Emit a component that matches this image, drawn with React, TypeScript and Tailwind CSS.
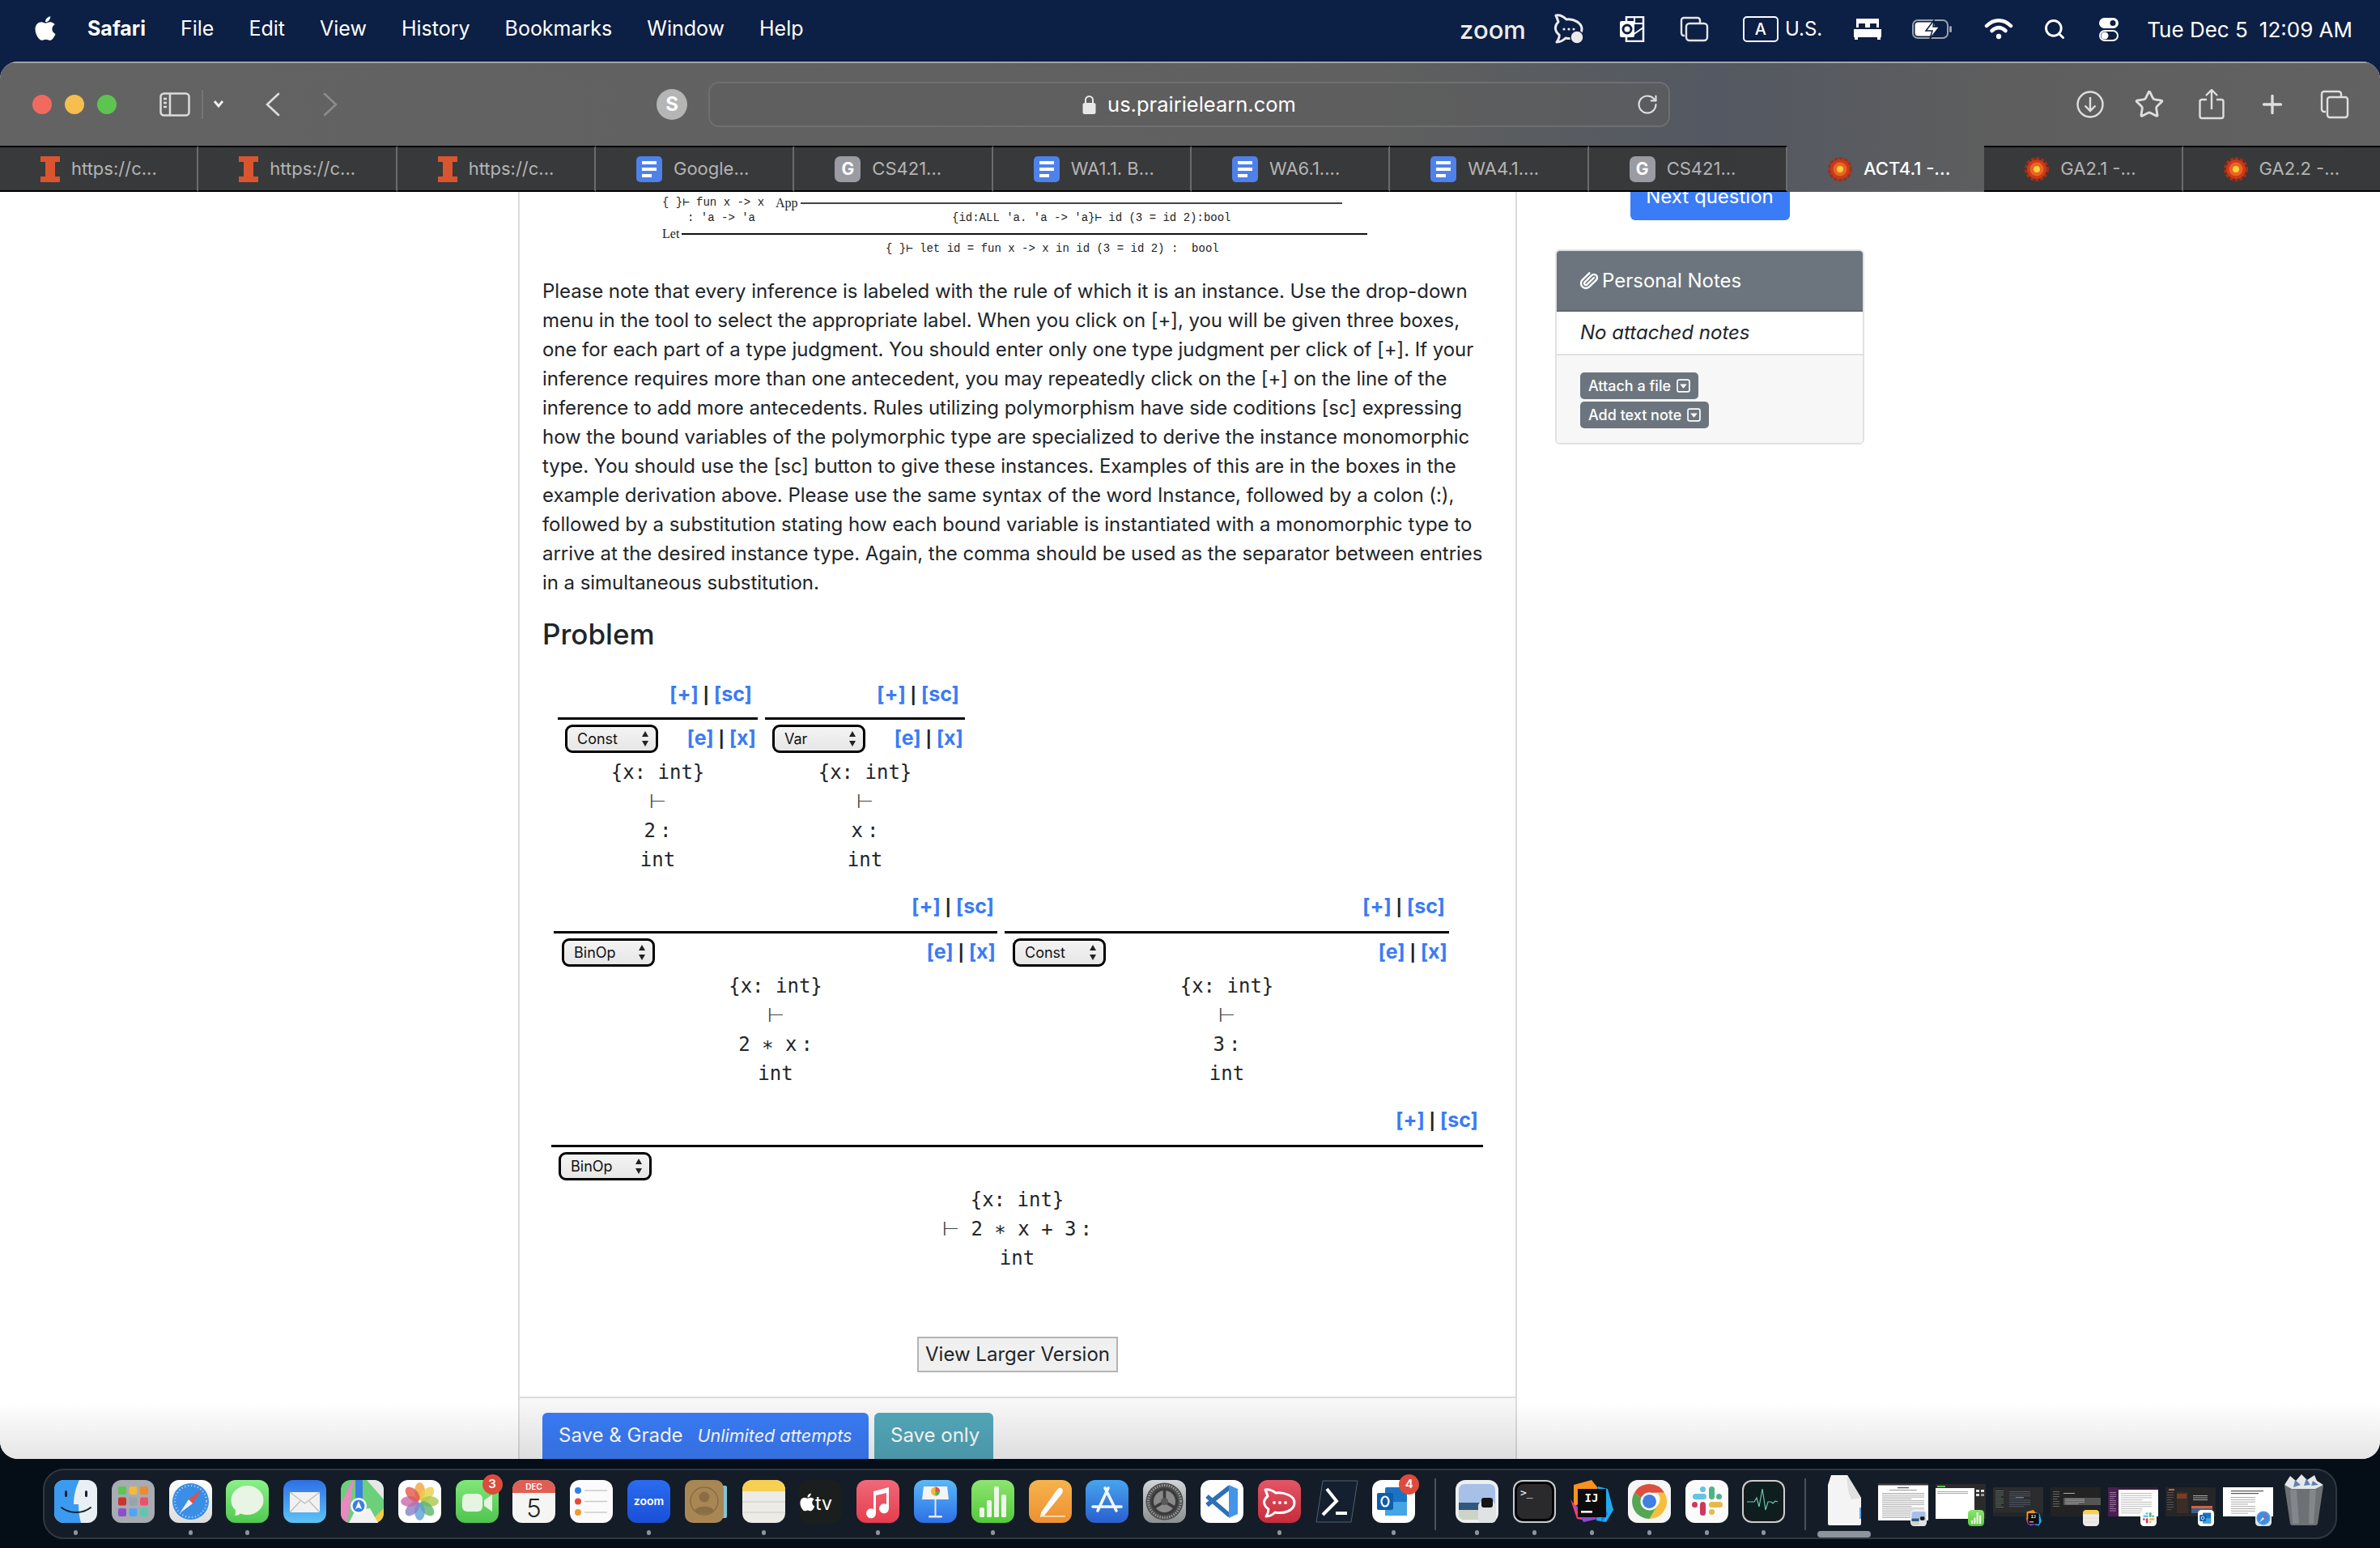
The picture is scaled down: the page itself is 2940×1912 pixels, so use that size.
import { Paperclip, Plus, RotateCw, Search, Star } from "lucide-react";
import { FaApple } from "react-icons/fa";
import type { ReactNode } from "react";

const mono = "[font-family:'DejaVu_Sans_Mono',monospace]";

const paragraph = [
  "Please note that every inference is labeled with the rule of which it is an instance. Use the drop-down",
  "menu in the tool to select the appropriate label. When you click on [+], you will be given three boxes,",
  "one for each part of a type judgment. You should enter only one type judgment per click of [+]. If your",
  "inference requires more than one antecedent, you may repeatedly click on the [+] on the line of the",
  "inference to add more antecedents. Rules utilizing polymorphism have side coditions [sc] expressing",
  "how the bound variables of the polymorphic type are specialized to derive the instance monomorphic",
  "type. You should use the [sc] button to give these instances. Examples of this are in the boxes in the",
  "example derivation above. Please use the same syntax of the word Instance, followed by a colon (:),",
  "followed by a substitution stating how each bound variable is instantiated with a monomorphic type to",
  "arrive at the desired instance type. Again, the comma should be used as the separator between entries",
  "in a simultaneous substitution.",
];

const tabs = [
  { icon: "i", label: "https://c..." },
  { icon: "i", label: "https://c..." },
  { icon: "i", label: "https://c..." },
  { icon: "d", label: "Google..." },
  { icon: "g", label: "CS421..." },
  { icon: "d", label: "WA1.1. B..." },
  { icon: "d", label: "WA6.1...." },
  { icon: "d", label: "WA4.1...." },
  { icon: "g", label: "CS421..." },
  { icon: "p", label: "ACT4.1 -...", active: true },
  { icon: "p", label: "GA2.1 -..." },
  { icon: "p", label: "GA2.2 -..." },
];

function Favicon({ kind }: { kind: string }) {
  if (kind === "i") {
    return (
      <svg width="24" height="32" viewBox="0 0 24 32" className="shrink-0">
        <path d="M0 0h24v7h-6v18h6v7H0v-7h6V7H0z" fill="#d9552f" />
      </svg>
    );
  }
  if (kind === "d") {
    return (
      <svg width="32" height="32" viewBox="0 0 32 32" className="shrink-0">
        <rect width="32" height="32" rx="5" fill="#4f81ea" />
        <rect x="7" y="6" width="18" height="4" fill="#fff" />
        <rect x="7" y="14" width="18" height="4" fill="#fff" />
        <rect x="7" y="22" width="12" height="4" fill="#fff" />
      </svg>
    );
  }
  if (kind === "g") {
    return (
      <div className="flex h-[32px] w-[32px] shrink-0 items-center justify-center rounded-[7px] bg-[#9b9ba3] text-[21px] font-bold text-white">
        G
      </div>
    );
  }
  return (
    <svg width="30" height="32" viewBox="0 0 30 32" className="shrink-0">
      <circle cx="15" cy="16" r="13" fill="none" stroke="#a92c14" strokeWidth="4" strokeDasharray="4 2" />
      <circle cx="15" cy="16" r="12" fill="#c93a1a" />
      <circle cx="15" cy="16" r="8.5" fill="#ec6424" />
      <circle cx="15" cy="16" r="4" fill="#f3d13a" />
    </svg>
  );
}

function MenuBar() {
  return (
    <div className="flex h-[76px] items-center pb-[4px] pl-[41px] pr-[34px] text-[25px] text-white">
      <FaApple className="mr-[37px] h-[34px] w-[30px] -translate-y-[1px]" />
      <div className="flex gap-[43px]">
        <span className="font-bold">Safari</span>
        <span>File</span>
        <span>Edit</span>
        <span>View</span>
        <span>History</span>
        <span>Bookmarks</span>
        <span>Window</span>
        <span>Help</span>
      </div>
      <div className="ml-auto flex items-center">
        <span className="text-[31px] font-medium leading-none text-[#ececec]">zoom</span>
        <svg width="40" height="38" viewBox="0 0 40 38" className="ml-[34px]" fill="none">
          <path d="M3 2c5-1 9 1 13 5 9-1 19 4 19 12 0 9-11 13-20 11-3 3-7 5-11 5 2-3 4-6 3-9-6-5-6-11-1-16-1-3-2-6-3-8z" stroke="#ececf0" strokeWidth="3" strokeLinejoin="round" />
          <circle cx="13" cy="19" r="1.6" fill="#ececf0" />
          <circle cx="19" cy="19" r="1.6" fill="#ececf0" />
          <circle cx="25" cy="19" r="1.6" fill="#ececf0" />
          <circle cx="29" cy="29" r="8" fill="#e8e8ee" stroke="#0b1d40" strokeWidth="1.5" />
        </svg>
        <svg width="32" height="32" viewBox="0 0 32 32" className="ml-[42px]">
          <rect x="8" y="1" width="21" height="30" fill="none" stroke="#fff" strokeWidth="2.5" />
          <path d="M8 9h21M18 1v8M29 14 16 23" stroke="#fff" strokeWidth="2" fill="none" />
          <rect x="0" y="6" width="18" height="20" rx="2" fill="#fff" />
          <circle cx="9" cy="16" r="5" fill="none" stroke="#0b1d40" strokeWidth="3" />
        </svg>
        <svg width="36" height="32" viewBox="0 0 36 32" className="ml-[42px]" fill="none" stroke="#e6e6ea" strokeWidth="2.4">
          <path d="M6 24H5a3 3 0 0 1-3-3V5a3 3 0 0 1 3-3h17a3 3 0 0 1 3 3v3" />
          <rect x="8" y="9" width="26" height="21" rx="4" />
        </svg>
        <div className="ml-[42px] flex h-[32px] w-[44px] items-center justify-center rounded-[5px] border-2 border-white text-[20px] font-medium">
          A
        </div>
        <span className="ml-[8px] text-[24px]">U.S.</span>
        <svg width="36" height="26" viewBox="0 0 36 26" className="ml-[38px]" fill="#fff">
          <path d="M4 0h28v11h-3V6h-8v5h-6V6H7v5H4z" />
          <path d="M1 13h34v10H1zM2 23h4v3H2zM30 23h4v3h-4z" />
        </svg>
        <svg width="50" height="24" viewBox="0 0 50 24" className="ml-[37px]">
          <rect x="1" y="1" width="43" height="22" rx="6" fill="none" stroke="#9aa2ad" strokeWidth="2" />
          <rect x="3.500" y="3.500" width="24" height="17" rx="4" fill="#fff" />
          <path d="M27 1 17 14h8l-3 10 12-15h-8z" fill="#fff" stroke="#0b1d40" strokeWidth="1.5" />
          <rect x="46" y="8" width="3" height="8" rx="1.5" fill="#9aa2ad" />
        </svg>
        <svg width="36" height="28" viewBox="0 0 36 28" className="ml-[39px]" fill="none" stroke="#fff" strokeWidth="4.5" strokeLinecap="round">
          <path d="M3 10c9-9 21-9 30 0" />
          <path d="M9.500 16c5.500-5 11.500-5 17 0" />
          <circle cx="18" cy="23" r="2.400" fill="#fff" strokeWidth="1.5" />
        </svg>
        <Search className="ml-[37px] h-[28px] w-[28px]" strokeWidth={2.5} />
        <svg width="26" height="32" viewBox="0 0 26 32" className="ml-[40px]">
          <rect x="1" y="2" width="24" height="13" rx="6.500" fill="#fff" />
          <circle cx="18" cy="8.500" r="3.500" fill="#0b1d40" />
          <rect x="2" y="18" width="22" height="12" rx="6" fill="none" stroke="#fff" strokeWidth="2" />
          <circle cx="8" cy="24" r="4.500" fill="#fff" />
        </svg>
        <div className="ml-[34px] flex gap-[14px] text-[26px]">
          <span>Tue Dec 5</span>
          <span>12:09 AM</span>
        </div>
      </div>
    </div>
  );
}

function Toolbar() {
  return (
    <div className="flex h-[104px] items-center border-t-2 border-[#a3a3a3] text-white">
      <div className="ml-[40px] flex gap-[16px]">
        <span className="h-[24px] w-[24px] rounded-full bg-[#f26a5e]" />
        <span className="h-[24px] w-[24px] rounded-full bg-[#f6bd4f]" />
        <span className="h-[24px] w-[24px] rounded-full bg-[#5dc44f]" />
      </div>
      <svg width="38" height="30" viewBox="0 0 38 30" fill="none" className="ml-[53px]" stroke="#dcdcdc" strokeWidth="2.5">
        <rect x="1.500" y="1.500" width="35" height="27" rx="4" />
        <path d="M13 2v26" />
        <path d="M5 8h4M5 13h4M5 18h4" />
      </svg>
      <span className="ml-[14px] h-[36px] w-[2px] bg-[#757575]" />
      <svg width="20" height="12" viewBox="0 0 20 12" fill="none" stroke="#eee" strokeWidth="3" className="ml-[9px]">
        <path d="M5 2l5 6 5-6" />
      </svg>
      <svg width="20" height="30" viewBox="0 0 20 30" fill="none" stroke="#dedede" strokeWidth="2.6" strokeLinecap="round" className="ml-[47px]">
        <path d="M17 2 3 15l14 13" />
      </svg>
      <svg width="20" height="30" viewBox="0 0 20 30" fill="none" stroke="#8c8c8c" strokeWidth="2.6" strokeLinecap="round" className="ml-[51px]">
        <path d="M3 2l14 13L3 28" />
      </svg>
      <div className="ml-[393px] flex h-[38px] w-[38px] items-center justify-center rounded-full bg-[#b5b5b5] text-[24px] font-bold">
        S
      </div>
      <div className="relative ml-[26px] flex h-[56px] w-[1188px] items-center justify-center rounded-[13px] border-2 border-[#6e6f70] bg-[#5d5e5e]/60">
        <svg width="17" height="24" viewBox="0 0 17 24" className="mr-[14px]">
          <path d="M4 11V6.500a4.500 4.500 0 0 1 9 0V11" fill="none" stroke="#e8e8e8" strokeWidth="2" />
          <rect x="0.500" y="10" width="16" height="14" rx="2.500" fill="#e8e8e8" />
        </svg>
        <span className="text-[25.5px]">us.prairielearn.com</span>
        <RotateCw className="absolute right-[12px] h-[28px] w-[28px] text-[#dedede]" strokeWidth={1.8} />
      </div>
      <div className="ml-auto mr-[38px] flex items-center gap-[41px] text-[#dedede]">
        <svg width="34" height="34" viewBox="0 0 34 34" fill="none" stroke="currentColor" strokeWidth="2.4">
          <circle cx="17" cy="17" r="15.500" />
          <path d="M17 8v17M10.500 18.500 17 25l6.500-6.500" />
        </svg>
        <Star className="-ml-[3px] h-[38px] w-[38px] -translate-x-[1px]" strokeWidth={1.8} />
        <svg width="32" height="38" viewBox="0 0 32 38" fill="none" stroke="currentColor" strokeWidth="2.4">
          <path d="M10 13H4a2.500 2.500 0 0 0-2.500 2.500v18A2.500 2.500 0 0 0 4 36h24a2.500 2.500 0 0 0 2.500-2.500v-18A2.500 2.500 0 0 0 28 13h-6" />
          <path d="M16 25V2M9 8l7-7 7 7" />
        </svg>
        <Plus className="h-[36px] w-[36px]" strokeWidth={2.2} />
        <svg width="36" height="36" viewBox="0 0 36 36" fill="none" stroke="currentColor" strokeWidth="2.4">
          <path d="M7 27H5a3 3 0 0 1-3-3V5a3 3 0 0 1 3-3h18a3 3 0 0 1 3 3v3" />
          <rect x="9" y="9" width="25" height="25" rx="3" />
        </svg>
      </div>
    </div>
  );
}

function TabBar() {
  return (
    <div className="flex h-[57px]">
      {tabs.map((t, i) => (
        <div
          key={i}
          className={
            t.active
              ? "flex flex-1 items-center gap-[14px] pl-[50px] text-[22px] font-medium text-white"
              : "flex flex-1 items-center gap-[14px] border-y-2 border-r-2 border-y-black border-r-[#6b6b6b] bg-[#343536]/90 pl-[50px] text-[22px] text-[#b4b4b4] last:border-r-0"
          }
        >
          <Favicon kind={t.icon} />
          <span className="whitespace-nowrap">{t.label}</span>
        </div>
      ))}
    </div>
  );
}

function FigureExample() {
  const serif = "[font-family:'Liberation_Serif',serif] text-[16px]";
  return (
    <div className="pt-[4px] text-[14px] leading-[19px] text-[#222] [font-family:'Liberation_Mono',monospace]">
      <div className="flex h-[19px] items-center pl-[176px]">
        <span className="whitespace-pre">{"{ }⊢ fun x -> x"}</span>
        <span className={`ml-[14px] ${serif}`}>App</span>
        <span className="ml-[3px] h-[2px] w-[669px] bg-[#444]" />
      </div>
      <div className="flex h-[19px] items-center pl-[207px]">
        <span className="w-[327px] whitespace-pre">{": 'a -> 'a"}</span>
        <span className="whitespace-pre">{"{id:ALL 'a. 'a -> 'a}⊢ id (3 = id 2):bool"}</span>
      </div>
      <div className="flex h-[19px] items-center pl-[176px]">
        <span className={serif}>Let</span>
        <span className="ml-[3px] h-[2px] w-[847px] bg-[#111]" />
      </div>
      <div className="flex h-[19px] items-center pl-[452px]">
        <span className="whitespace-pre">{"{ }⊢ let id = fun x -> x in id (3 = id 2) :  bool"}</span>
      </div>
    </div>
  );
}

function BlueLinks({ items }: { items: [string, string] }) {
  return (
    <span className="whitespace-pre text-[25px] font-bold leading-[36px] text-[#212529]">
      <span className="text-[#3a7bf6]">{items[0]}</span>
      <span className="mx-[1px] text-[20px]"> | </span>
      <span className="text-[#3a7bf6]">{items[1]}</span>
    </span>
  );
}

function RuleSelect({ label }: { label: string }) {
  return (
    <div className="relative flex h-[35px] w-[115px] shrink-0 items-center rounded-[9px] border-[3px] border-black bg-[linear-gradient(180deg,#f4f4f4,#e6e6e6)] pl-[12px] text-[18px] text-[#111]">
      {label}
      <svg width="8" height="19" viewBox="0 0 8 19" className="absolute right-[9px]">
        <path d="M4 0l4 7H0zM4 19l4-7H0z" fill="#222" />
      </svg>
    </div>
  );
}

function Turnstile() {
  return <span className="text-[24px] font-light text-[#444] [font-family:'DejaVu_Sans',sans-serif]">⊢</span>;
}

function Typed({ expr }: { expr: string }) {
  return (
    <span>
      {expr}
      <span className="ml-[5px]">:</span>
    </span>
  );
}

type NodeProps = {
  rule: string;
  lines: ReactNode[];
  actions?: boolean;
  premises?: ReactNode;
  width: string;
  pad: string;
  selectIndent: string;
};

function Inference({ rule, lines, actions = true, premises, width, pad, selectIndent }: NodeProps) {
  return (
    <div className={`flex shrink-0 flex-col ${width}`}>
      {premises}
      <div className={`flex h-[36px] -translate-y-[1px] justify-end ${pad}`}>
        <BlueLinks items={["[+]", "[sc]"]} />
      </div>
      <div className="h-[3px] bg-black" />
      <div className={`mt-[6px] flex h-[35px] items-center justify-between ${selectIndent}`}>
        <RuleSelect label={rule} />
        {actions && (
          <span className="-translate-y-[1px] pr-[2px]">
            <BlueLinks items={["[e]", "[x]"]} />
          </span>
        )}
      </div>
      <div className={`mt-[6px] flex flex-col items-center text-[24px] text-[#212529] ${mono}`}>
        {lines.map((l, i) => (
          <div key={i} className="h-[36px] whitespace-pre leading-[36px]">
            {l}
          </div>
        ))}
      </div>
    </div>
  );
}

function Tree() {
  return (
    <div className="ml-[11px] mt-[33px] w-[1151px]">
      <Inference
        width="w-[1151px]"
        pad="mb-[12px] pr-[6px]"
        selectIndent="pl-[9px]"
        rule="BinOp"
        actions={false}
        lines={[
          "{x: int}",
          <span key="t">
            <Turnstile /> <Typed expr="2 ∗ x + 3" />
          </span>,
          "int",
        ]}
        premises={
          <div className="mb-[22px] flex items-end gap-[9px] pl-[3px]">
            <Inference
              width="w-[548px]"
              pad="mb-[12px] pr-[4px]"
              selectIndent="pl-[10px]"
              rule="BinOp"
              lines={["{x: int}", <Turnstile key="t" />, <Typed key="e" expr="2 ∗ x" />, "int"]}
              premises={
                <div className="mb-[22px] flex items-end gap-[9px] pl-[5px]">
                  <Inference
                    width="w-[247px]"
                    pad="mb-[10px] pr-[7px]"
                    selectIndent="pl-[9px]"
                    rule="Const"
                    lines={["{x: int}", <Turnstile key="t" />, <Typed key="e" expr="2" />, "int"]}
                  />
                  <Inference
                    width="w-[247px]"
                    pad="mb-[10px] pr-[7px]"
                    selectIndent="pl-[9px]"
                    rule="Var"
                    lines={["{x: int}", <Turnstile key="t" />, <Typed key="e" expr="x" />, "int"]}
                  />
                </div>
              }
            />
            <Inference
              width="w-[549px]"
              pad="mb-[12px] pr-[5px]"
              selectIndent="pl-[10px]"
              rule="Const"
              lines={["{x: int}", <Turnstile key="t" />, <Typed key="e" expr="3" />, "int"]}
            />
          </div>
        }
      />
    </div>
  );
}

function MainCard() {
  return (
    <div className="ml-[640px] w-[1234px] shrink-0 border-x-2 border-[#dcdcdc]">
      <FigureExample />
      <div className="px-[28px] pt-[25px] text-[24px] leading-[36px] tracking-[-0.055px] text-[#212529]">
        {paragraph.map((line, i) => (
          <div key={i} className="whitespace-nowrap">
            {line}
          </div>
        ))}
        <h2 className="mt-[21px] text-[35px] font-medium leading-[48px] tracking-normal">Problem</h2>
      </div>
      <div className="pl-[28px]">
        <Tree />
      </div>
      <div className="mt-[79px] flex justify-center">
        <div className="flex h-[44px] w-[248px] items-center justify-center border-2 border-[#b4b4b4] bg-[#f0f0f0] text-[24px] text-[#212529]">
          View Larger Version
        </div>
      </div>
      <div className="mt-[30px] flex h-[200px] gap-[7px] border-t-2 border-[#dcdcdc] bg-[#f7f7f7] pl-[28px] pt-[18px]">
        <div className="flex h-[70px] w-[403px] items-start gap-[18px] rounded-[6px] bg-[#3a7bf6] pl-[20px] pt-[10px] text-[24px] text-white">
          <span>Save &amp; Grade</span>
          <span className="mt-[2px] text-[21.5px] italic">Unlimited attempts</span>
        </div>
        <div className="h-[70px] w-[147px] rounded-[6px] bg-[#52a7ba] pl-[20px] pt-[10px] text-[24px] text-white">
          Save only
        </div>
      </div>
    </div>
  );
}

function Sidebar() {
  return (
    <div className="ml-[47px] w-[382px] shrink-0">
      <div className="-mt-[23px] flex justify-center">
        <div className="flex h-[58px] w-[197px] items-center justify-center rounded-[6px] bg-[#3a7bf6] text-[24px] text-white">
          Next question
        </div>
      </div>
      <div className="mt-[36px] overflow-hidden rounded-[6px] border-2 border-[#e1e1e1]">
        <div className="flex h-[75px] items-center gap-[4px] border-b-2 border-[#5f676e] bg-[#6c757d] pl-[28px] text-[24px] text-white">
          <Paperclip className="h-[24px] w-[24px] -scale-x-100 rotate-90" strokeWidth={2.4} />
          Personal Notes
        </div>
        <div className="flex h-[54px] items-center border-b-2 border-[#e1e1e1] pl-[29px] text-[24px] italic text-[#212529]">
          No attached notes
        </div>
        <div className="flex h-[108px] flex-col items-start gap-[3px] bg-[#f7f7f7] pl-[29px] pt-[21px]">
          <SmallButton label="Attach a file" />
          <SmallButton label="Add text note" />
        </div>
      </div>
    </div>
  );
}

function SmallButton({ label }: { label: string }) {
  return (
    <div className="flex h-[33px] items-center gap-[7px] rounded-[5px] bg-[#6c757d] px-[10px] text-[18px] font-medium text-white">
      {label}
      <svg width="17" height="17" viewBox="0 0 16 16">
        <rect x="1" y="1" width="14" height="14" rx="2" fill="none" stroke="#fff" strokeWidth="1.6" />
        <path d="M4 6h8l-4 5z" fill="#fff" />
      </svg>
    </div>
  );
}

/* dock icons, all on a 53 box */
function Icon({ children, from, to, id }: { children: ReactNode; from?: string; to?: string; id?: string }) {
  return (
    <svg viewBox="0 0 53 53" className="block h-full w-full">
      {id && (
        <defs>
          <linearGradient id={id} x1="0" y1="0" x2="0" y2="1">
            <stop offset="0" stopColor={from} />
            <stop offset="1" stopColor={to} />
          </linearGradient>
        </defs>
      )}
      {id && <rect width="53" height="53" rx="12" fill={`url(#${id})`} />}
      {children}
    </svg>
  );
}

const Finder = () => (
  <Icon>
    <rect width="53" height="53" rx="12" fill="#e9eff5" />
    <path d="M12 0h19c-4 9-7 18-7 30h6c0 8 1 16 3 23H12A12 12 0 0 1 0 41V12A12 12 0 0 1 12 0z" fill="#3b9bf0" />
    <rect x="13" y="13" width="3" height="8" rx="1.5" fill="#123" />
    <rect x="38" y="13" width="3" height="8" rx="1.5" fill="#123" />
    <path d="M9 34c10 8 26 8 36 0" fill="none" stroke="#123" strokeWidth="2" strokeLinecap="round" />
  </Icon>
);
const Launchpad = () => {
  const c = ["#5cc64f", "#f5b93c", "#ef8a2e", "#c8352b", "#9aa3a8", "#e9536a", "#8a4fd0", "#4ea7f5", "#5bc8b0"];
  return (
    <Icon>
      <rect width="53" height="53" rx="12" fill="#a8abb1" />
      {c.map((f, i) => (
        <rect key={i} x={8 + (i % 3) * 13.5} y={8 + Math.floor(i / 3) * 13.5} width="10" height="10" rx="2" fill={f} />
      ))}
    </Icon>
  );
};
const Safari = () => (
  <Icon id="gSafari" from="#ffffff" to="#dcdcdc">
    <circle cx="26.5" cy="26.5" r="22.5" fill="#3a8ee6" />
    <circle cx="26.5" cy="26.5" r="19.5" fill="none" stroke="#cfe4fa" strokeWidth="2" strokeDasharray="1 3" />
    <path d="M40 12 24 24l5 5z" fill="#ee4b3e" />
    <path d="M13 41l16-12-5-5z" fill="#f0f0f0" />
  </Icon>
);
const Messages = () => (
  <Icon id="gMsg" from="#8df08a" to="#4fc94f">
    <ellipse cx="26.5" cy="25" rx="20" ry="18" fill="#e8f5e4" />
    <path d="M11 44c4 0 7-2 9-5l-8-4c0 4 0 7-1 9z" fill="#e8f5e4" />
  </Icon>
);
const Mail = () => (
  <Icon id="gMail" from="#2f6fe6" to="#5cc4f6">
    <rect x="8" y="15" width="37" height="25" rx="2" fill="#f1f1f1" />
    <path d="M8 15l18.500 14L45 15M8 40l13-14M45 40 32 26" fill="none" stroke="#bcbcbc" strokeWidth="1.2" />
  </Icon>
);
const Maps = () => (
  <Icon>
    <rect width="53" height="53" rx="12" fill="#6bcf7b" />
    <path d="M0 30 14 0h2L8 53H12A12 12 0 0 1 0 41z" fill="#e889c0" />
    <path d="M35 53 53 35v6a12 12 0 0 1-12 12z" fill="#f4cb44" />
    <path d="M32 0h9a12 12 0 0 1 12 12v12z" fill="#e7e7e7" />
    <path d="M18 0h9v24h-9z" fill="#3b7fe5" />
    <path d="M10 53l8-16 18-2 10 18z" fill="#f2f2f2" />
    <circle cx="22" cy="32" r="10" fill="#fff" />
    <circle cx="22" cy="32" r="7.500" fill="#3b7fe5" />
    <path d="M22 26l4 10-4-2-4 2z" fill="#fff" />
  </Icon>
);
const Photos = () => {
  const c = ["#f0a43a", "#e8cf46", "#a9c84a", "#5cb56a", "#5a9fd6", "#8a7ec8", "#c46aa8", "#e0584c"];
  return (
    <Icon>
      <rect width="53" height="53" rx="12" fill="#fff" />
      {c.map((f, i) => (
        <ellipse key={i} cx="26.5" cy="14" rx="6.5" ry="11" fill={f} fillOpacity="0.8" transform={`rotate(${i * 45} 26.5 26.5)`} />
      ))}
    </Icon>
  );
};
const FaceTime = () => (
  <Icon id="gFace" from="#7fe878" to="#4fc44f">
    <rect x="8" y="17" width="25" height="22" rx="6" fill="#e7f3e3" />
    <path d="M35 25l10-7v21l-10-7z" fill="#e7f3e3" />
  </Icon>
);
const Calendar = () => (
  <Icon>
    <rect width="53" height="53" rx="12" fill="#f5f5f3" />
    <path d="M12 0h29a12 12 0 0 1 12 12v4H0v-4A12 12 0 0 1 12 0z" fill="#e05f55" />
    <text x="26.5" y="12" textAnchor="middle" fontSize="10" fill="#fff" fontFamily="Inter" fontWeight="600">DEC</text>
    <text x="26.5" y="46" textAnchor="middle" fontSize="31" fill="#222" fontFamily="Inter" fontWeight="300">5</text>
  </Icon>
);
const Reminders = () => (
  <Icon>
    <rect width="53" height="53" rx="12" fill="#fbfbfb" />
    {[
      { c: "#2f7fe6", y: 13 },
      { c: "#e64a3f", y: 26.5 },
      { c: "#ef9a2e", y: 40 },
    ].map(({ c, y }) => (
      <g key={c}>
        <circle cx="10" cy={y} r="4" fill={c} />
        <rect x="18" y={y - 0.7} width="28" height="1.4" fill="#c9c9c9" />
      </g>
    ))}
  </Icon>
);
const Zoom = () => (
  <Icon id="gZoom" from="#2a6cf0" to="#1a4fd8">
    <text x="26.5" y="31" textAnchor="middle" fontSize="14" fill="#fff" fontFamily="Inter" fontWeight="600">zoom</text>
  </Icon>
);
const Contacts = () => (
  <Icon>
    <rect x="44" y="7" width="8" height="40" rx="2" fill="#7fc6d8" />
    <rect width="48" height="53" rx="10" fill="#a98755" />
    <circle cx="24" cy="26" r="17" fill="none" stroke="#8b6d43" strokeWidth="1.5" />
    <circle cx="24" cy="21" r="6.5" fill="#8b6d43" />
    <path d="M12 38c3-7 21-7 24 0-6 5-18 5-24 0z" fill="#8b6d43" />
  </Icon>
);
const Notes = () => (
  <Icon>
    <rect width="53" height="53" rx="12" fill="#ecebe6" />
    <path d="M12 0h29a12 12 0 0 1 12 12v2H0v-2A12 12 0 0 1 12 0z" fill="#f7cf52" />
    <path d="M0 27h53M0 40h53" stroke="#d7d6d0" strokeWidth="1.4" />
  </Icon>
);
const Tv = () => (
  <Icon>
    <rect width="53" height="53" rx="12" fill="#1a1f1d" />
    <g transform="translate(2 16) scale(0.045)" fill="#fff">
      <path d="M318 268c0-61 50-90 52-92-28-42-73-47-89-48-38-4-74 22-93 22s-49-22-80-21C67 130 29 152 8 188c-43 74-11 184 31 245 20 30 45 63 77 62 31-1 43-20 80-20s48 20 80 19c33-1 54-30 74-60 23-34 33-68 33-70-1 0-64-25-65-96zM258 88c17-20 28-48 25-76-24 1-53 16-70 36-15 18-29 46-25 74 27 2 54-14 70-34z" />
    </g>
    <text x="20" y="37" fontSize="23" fill="#fff" fontFamily="Inter">tv</text>
  </Icon>
);
const Music = () => (
  <Icon id="gMusic" from="#f0697b" to="#e63d4c">
    <path d="M21 14l19-5v26a6 6 0 1 1-3-5V16l-13 3v22a6 6 0 1 1-3-5z" fill="#fff" />
  </Icon>
);
const Keynote = () => (
  <Icon id="gKey" from="#5ab8f8" to="#2c6fe6">
    <path d="M12 8h29l2 16H10z" fill="#f4f4f4" />
    <circle cx="26.5" cy="14" r="5.5" fill="#f0b93a" />
    <path d="M26.5 14V8.500a5.500 5.500 0 0 1 5.500 5.500z" fill="#e84b4b" />
    <path d="M26.5 14H32a5.500 5.500 0 0 1-5.500 5.500z" fill="#4ab55f" />
    <rect x="25.5" y="24" width="2" height="20" fill="#e8e8e8" />
    <rect x="18" y="44" width="17" height="2.500" rx="1" fill="#e8e8e8" />
  </Icon>
);
const Numbers = () => (
  <Icon id="gNum" from="#8ce56f" to="#55c93a">
    <rect x="10" y="34" width="6" height="12" rx="1.5" fill="#eef6ea" />
    <rect x="19" y="25" width="6" height="21" rx="1.5" fill="#eef6ea" />
    <rect x="28" y="8" width="6" height="38" rx="1.5" fill="#eef6ea" />
    <rect x="37" y="18" width="6" height="28" rx="1.5" fill="#eef6ea" />
  </Icon>
);
const Pages = () => (
  <Icon id="gPages" from="#f6b44b" to="#ee8f33">
    <path d="M40 10c3 2 2 5 0 8L19 44l-5 2 1-6 19-27c2-3 4-4 6-3z" fill="#fafafa" />
    <rect x="15" y="44" width="30" height="1.600" fill="#fbe2b6" />
  </Icon>
);
const AppStore = () => (
  <Icon id="gApp" from="#46a4ee" to="#2a5fcf">
    <path d="M28 10 15 38M24 10l14 28M9 33h35" stroke="#f4f7fb" strokeWidth="3.6" strokeLinecap="round" />
  </Icon>
);
const SysPrefs = () => (
  <Icon id="gSys" from="#d0d5d8" to="#8c8f90">
    <circle cx="26.5" cy="26.5" r="23" fill="#4b4b4b" />
    <circle cx="26.5" cy="26.5" r="20" fill="none" stroke="#9a9a9a" strokeWidth="3" strokeDasharray="1.5 1.5" />
    <circle cx="26.5" cy="26.5" r="15" fill="#8a8a8a" stroke="#3a3a3a" strokeWidth="3" />
    <path d="M26.500 26.500V12M26.500 26.500 14 34M26.500 26.500 39 34" stroke="#3a3a3a" strokeWidth="3.500" />
    <circle cx="26.500" cy="26.500" r="4.500" fill="#5a5a5a" />
  </Icon>
);
const VsCode = () => (
  <Icon>
    <rect width="53" height="53" rx="12" fill="#fff" />
    <path d="M36 9 8 31M8 20l28 24" stroke="#2e6fb8" strokeWidth="5.500" />
    <path d="M35 6l11 5v31l-11 5z" fill="#4595e6" />
  </Icon>
);
const Rocket = () => (
  <Icon id="gRocket" from="#e45566" to="#c72c3a">
    <path d="M9 12c5-1 9 1 13 4 10-1 23 3 23 12 0 10-13 14-24 12-3 3-7 5-11 5 2-3 3-6 3-9-7-5-7-11-1-16-1-3-2-6-3-8z" fill="none" stroke="#fff" strokeWidth="3" strokeLinejoin="round" />
    <circle cx="20" cy="28" r="1.900" fill="#fff" />
    <circle cx="27" cy="28" r="1.900" fill="#fff" />
    <circle cx="34" cy="28" r="1.900" fill="#fff" />
  </Icon>
);
const PowerShell = () => (
  <Icon>
    <path d="M9 1h43l-8 51H1z" fill="#14202f" stroke="#506070" strokeWidth="1" />
    <path d="M14 11l12 15-17 17" fill="none" stroke="#fff" strokeWidth="4" />
    <rect x="25" y="39" width="14" height="4" fill="#fff" />
  </Icon>
);
const Outlook = () => (
  <Icon>
    <rect width="53" height="53" rx="12" fill="#fff" />
    <rect x="16" y="9" width="27" height="35" rx="2" fill="#1e72c4" />
    <path d="M16 27h27v17H16z" fill="#44a4e6" />
    <rect x="6" y="16" width="20" height="21" rx="2" fill="#0f5ea8" />
    <ellipse cx="16" cy="26.5" rx="4.5" ry="6" fill="none" stroke="#fff" strokeWidth="2.2" />
  </Icon>
);
const Preview = () => (
  <Icon>
    <rect width="53" height="53" rx="12" fill="#eceef0" />
    <rect x="4" y="5" width="45" height="44" rx="7" fill="#a7c0e8" />
    <rect x="4" y="28" width="45" height="9" fill="#2e5880" />
    <path d="M4 37h45v6a6 6 0 0 1-6 6H10a6 6 0 0 1-6-6z" fill="#cdd3c6" />
    <rect x="28" y="27" width="22" height="26" rx="5" fill="#dfe3e6" />
    <rect x="32" y="22" width="14" height="12" rx="3" fill="#151515" />
  </Icon>
);
const Terminal = () => (
  <Icon>
    <rect width="53" height="53" rx="12" fill="#c7ccd0" />
    <rect x="2" y="2" width="49" height="49" rx="10" fill="#000" />
    <rect x="5" y="5" width="43" height="43" rx="8" fill="#2a2a2c" />
    <text x="9" y="20" fontSize="13" fill="#fff" fontFamily="DejaVu Sans Mono">&gt;_</text>
  </Icon>
);
const Idea = () => (
  <Icon>
    <path d="M4 6 26 0l8 10-30 24z" fill="#f7921e" />
    <path d="M0 24l20 26-12-2z" fill="#ee3f78" />
    <path d="M34 8l12 3 7 26-9 15-12-2z" fill="#21a9f0" />
    <path d="M4 30l12 22 18-4z" fill="#8e4ad0" />
    <path d="M40 30l6 12-8 10z" fill="#1f6fe0" />
    <rect x="9" y="11" width="35" height="35" fill="#0c0c0c" />
    <text x="26" y="27" textAnchor="middle" fontSize="14" fontWeight="700" fill="#fff" fontFamily="DejaVu Sans Mono">IJ</text>
    <rect x="13" y="38" width="14" height="2.6" fill="#fff" />
  </Icon>
);
const Chrome = () => (
  <Icon>
    <rect width="53" height="53" rx="12" fill="#f6f6f6" />
    <path d="M26.500 5a21.500 21.500 0 0 1 18.600 10.700H26.500a11 11 0 0 0-10 6.500L8 15.700A21.500 21.500 0 0 1 26.500 5z" fill="#dd4f3e" />
    <path d="M45.100 15.700A21.500 21.500 0 0 1 26.500 48l9.500-16a11 11 0 0 0 0-16.300z" fill="#f4bf3c" />
    <path d="M8 15.700A21.500 21.500 0 0 0 26.500 48l9.500-16a11 11 0 0 1-19.500-9.800z" fill="#55a553" />
    <circle cx="26.500" cy="26.500" r="11" fill="#fff" />
    <circle cx="26.500" cy="26.500" r="8.500" fill="#3f7fe6" />
  </Icon>
);
const Slack = () => (
  <Icon>
    <rect width="53" height="53" rx="12" fill="#fbfbfb" />
    <rect x="9" y="17" width="17" height="7" rx="3.500" fill="#64c3e8" />
    <rect x="18" y="8" width="7" height="7" rx="3.500" fill="#64c3e8" />
    <rect x="29" y="8" width="7" height="16" rx="3.500" fill="#4fb286" />
    <rect x="38" y="17" width="7" height="7" rx="3.500" fill="#4fb286" />
    <rect x="29" y="27" width="17" height="7" rx="3.500" fill="#e8b84a" />
    <rect x="29" y="36" width="7" height="7" rx="3.500" fill="#e8b84a" />
    <rect x="18" y="27" width="7" height="17" rx="3.500" fill="#d0365e" />
    <rect x="8" y="27" width="7" height="7" rx="3.500" fill="#d0365e" />
  </Icon>
);
const Activity = () => (
  <Icon>
    <rect width="53" height="53" rx="12" fill="#c9ced1" />
    <rect x="2" y="2" width="49" height="49" rx="10" fill="#1a1a1a" />
    <rect x="5" y="5" width="43" height="43" rx="7" fill="#0e1e1e" />
    <path d="M6 27h9l3-5 3 11 4-22 4 26 3-10h4l2 2 3-3 3 1" fill="none" stroke="#6fc5a9" strokeWidth="1.2" />
  </Icon>
);
const DocFile = () => (
  <svg viewBox="0 0 41 62" className="block h-[62px] w-[41px]">
    <path d="M4 0h20l17 28v32a2 2 0 0 1-2 2H2a2 2 0 0 1-2-2V12z" fill="#f4f4f4" />
    <path d="M24 0l17 28-12 2c-4-8-6-20-5-30z" fill="#e0e0e0" />
    <rect x="39" y="40" width="2" height="14" fill="#5ba7e6" />
  </svg>
);
const Trash = () => (
  <svg viewBox="0 0 54 64" className="block h-[64px] w-[54px]">
    <path d="M3 15h48l-7 47a3 3 0 0 1-3 2H13a3 3 0 0 1-3-2z" fill="#6e7173" />
    <path d="M10 20h8l3 42h-8zM34 20h8l-3 42h-6z" fill="#83878a" />
    <path d="M3 14 10 3l7 6 7-8 7 7 9-6 3 7 8 5-10 5H12z" fill="#e8e8e8" />
    <path d="M16 8l7 6-9 3zM30 6l5 8-8 1zM38 9l7 5-9 1z" fill="#5d83b5" />
  </svg>
);

const apps: { el: ReactNode; dot?: boolean; badge?: string }[] = [
  { el: <Finder />, dot: true },
  { el: <Launchpad /> },
  { el: <Safari />, dot: true },
  { el: <Messages />, dot: true },
  { el: <Mail /> },
  { el: <Maps /> },
  { el: <Photos /> },
  { el: <FaceTime />, badge: "3" },
  { el: <Calendar /> },
  { el: <Reminders /> },
  { el: <Zoom />, dot: true },
  { el: <Contacts /> },
  { el: <Notes />, dot: true },
  { el: <Tv /> },
  { el: <Music />, dot: true },
  { el: <Keynote /> },
  { el: <Numbers />, dot: true },
  { el: <Pages /> },
  { el: <AppStore /> },
  { el: <SysPrefs /> },
  { el: <VsCode /> },
  { el: <Rocket />, dot: true },
  { el: <PowerShell /> },
  { el: <Outlook />, dot: true, badge: "4" },
];

const running: { el: ReactNode }[] = [
  { el: <Preview /> },
  { el: <Terminal /> },
  { el: <Idea /> },
  { el: <Chrome /> },
  { el: <Slack /> },
  { el: <Activity /> },
];

// small window previews in the dock
function Lines({ x, y, w, n, step, fill }: { x: number; y: number; w: number; n: number; step: number; fill: string }) {
  return (
    <>
      {Array.from({ length: n }).map((_, i) => (
        <rect key={i} x={x} y={y + i * step} width={i % 4 === 3 ? w * 0.7 : w} height="1" fill={fill} />
      ))}
    </>
  );
}

const thumbArt: ReactNode[] = [
  <svg key="1" viewBox="0 0 62 46" className="block h-[46px] w-[62px]">
    <rect width="62" height="46" fill="#fff" />
    <rect width="62" height="2.500" fill="#333" />
    <rect x="24" y="5" width="14" height="1.200" fill="#555" />
    <rect x="14" y="8" width="34" height="1" fill="#999" />
    <Lines x={5} y={12} w={52} n={14} step={2.3} fill="#aaa" />
  </svg>,
  <svg key="2" viewBox="0 0 62 43" className="block h-[43px] w-[62px]">
    <rect width="62" height="43" fill="#2b2b2c" />
    <rect y="5" width="48" height="38" fill="#fff" />
    <rect width="10" height="2" x="2" y="2" fill="#5fbf5a" />
    <Lines x={2} y={9} w={38} n={2} step={2} fill="#aaa" />
    <rect x="50" y="7" width="4" height="3" fill="#ddd" />
    <rect x="56" y="7" width="4" height="3" fill="#ddd" />
    <rect x="50" y="12" width="4" height="3" fill="#ddd" />
    <rect x="56" y="12" width="4" height="3" fill="#999" />
  </svg>,
  <svg key="3" viewBox="0 0 62 36" className="block h-[36px] w-[62px]">
    <rect width="62" height="36" fill="#2b2c2d" />
    <Lines x={3} y={4} w={10} n={9} step={2.5} fill="#5a6a5a" />
    <Lines x={20} y={5} w={26} n={8} step={2.6} fill="#505a6a" />
    <rect x="28" y="12" width="10" height="1" fill="#4a86c8" />
    <rect y="31" width="62" height="5" fill="#242526" />
  </svg>,
  <svg key="4" viewBox="0 0 62 36" className="block h-[36px] w-[62px]">
    <rect width="62" height="36" fill="#232324" />
    <Lines x={3} y={5} w={8} n={7} step={3} fill="#666" />
    <rect x="16" y="13" width="46" height="9" fill="#555" />
    <rect x="16" y="7" width="14" height="1" fill="#aaa" />
    <Lines x={18} y={14} w={24} n={4} step={2} fill="#999" />
  </svg>,
  <svg key="5" viewBox="0 0 62 36" className="block h-[36px] w-[62px]">
    <rect width="62" height="36" fill="#fff" />
    <rect width="62" height="3" fill="#3a1a3c" />
    <rect width="13" height="36" fill="#4a1f50" />
    <Lines x={2} y={6} w={8} n={10} step={2.5} fill="#9b7aa0" />
    <Lines x={16} y={7} w={38} n={10} step={2.7} fill="#bbb" />
  </svg>,
  <svg key="6" viewBox="0 0 62 36" className="block h-[36px] w-[62px]">
    <rect width="62" height="36" fill="#262626" />
    <rect x="4" y="2" width="7" height="2" fill="#d9603a" />
    <Lines x={2} y={6} w={8} n={8} step={3} fill="#555" />
    <rect x="14" y="6" width="14" height="26" fill="#3a2d28" />
    <rect x="14" y="8" width="12" height="6" fill="#7a3d20" />
    <Lines x={34} y={10} w={18} n={3} step={2.5} fill="#aaa" />
    <rect x="32" y="23" width="26" height="3" fill="#d9603a" />
    <rect x="32" y="26" width="26" height="6" fill="#3d5f8a" />
  </svg>,
  <svg key="7" viewBox="0 0 62 36" className="block h-[36px] w-[62px]">
    <rect width="62" height="36" fill="#fff" />
    <rect x="10" y="4" width="40" height="1.200" fill="#555" />
    <rect x="10" y="7" width="34" height="1.200" fill="#555" />
    <Lines x={10} y={12} w={30} n={8} step={2.8} fill="#aaa" />
  </svg>,
];

const thumbs: { top: string; badge: ReactNode }[] = [
  { top: "pt-[4px]", badge: <Preview /> },
  { top: "pt-[5px]", badge: <Numbers /> },
  { top: "pt-[9px]", badge: <Idea /> },
  { top: "pt-[9px]", badge: <Notes /> },
  { top: "pt-[9px]", badge: <Slack /> },
  { top: "pt-[9px]", badge: <Outlook /> },
  { top: "pt-[9px]", badge: <Safari /> },
];

function DockTile({ el, dot, badge }: { el: ReactNode; dot?: boolean; badge?: string }) {
  return (
    <div className="relative h-[53px] w-[53px] shrink-0">
      {el}
      {badge && (
        <span className="absolute -right-[5px] -top-[7px] flex h-[25px] w-[25px] items-center justify-center rounded-full bg-[#dd4b3c] text-[15px] font-semibold text-white">
          {badge}
        </span>
      )}
      {dot && <span className="absolute -bottom-[15px] left-[24px] h-[6px] w-[5px] rounded-full bg-[#8d949b]" />}
    </div>
  );
}

function Dock() {
  return (
    <div className="ml-[53px] mt-[12px] flex h-[87px] w-[2834px] items-start rounded-[26px] border-2 border-[#2e3843] bg-[#131c27] pl-[12px] pt-[12px]">
      <div className="flex gap-[17.8px]">
        {apps.map((a, i) => (
          <DockTile key={i} el={a.el} dot={a.dot} badge={a.badge} />
        ))}
      </div>
      <span className="mx-[24px] -mt-[2px] h-[64px] w-[2px] bg-[#4a525b]" />
      <div className="flex gap-[17.8px]">
        {running.map((a, i) => (
          <DockTile key={i} el={a.el} dot />
        ))}
      </div>
      <span className="mx-[24px] -mt-[2px] h-[64px] w-[2px] bg-[#4a525b]" />
      <div className="relative ml-[3px] mr-[21px] -mt-[6px]">
        <DocFile />
        <span className="absolute -bottom-[15px] -left-[13px] h-[8px] w-[66px] rounded-full bg-[#8d949b]" />
      </div>
      <div className="flex gap-[9px]">
        {thumbs.map((t, i) => (
          <div key={i} className={`relative h-[57px] w-[62px] shrink-0 ${t.top}`}>
            {thumbArt[i]}
            <div className="absolute bottom-0 right-[2px] h-[20px] w-[20px]">{t.badge}</div>
          </div>
        ))}
      </div>
      <div className="ml-[11px] -mt-[8px]">
        <Trash />
      </div>
    </div>
  );
}

export default function App() {
  return (
    <div className="flex h-[1912px] w-[2940px] flex-col overflow-hidden bg-[linear-gradient(180deg,#0c1f44_0,#0c1f44_200px,#050d16_200px)] [font-family:Inter,sans-serif]">
      <MenuBar />
      <div className="flex h-[1726px] flex-col overflow-hidden rounded-[22px] bg-white">
        <div className="bg-[linear-gradient(90deg,#636363_0%,#5f605f_58%,#535862_72%,#5e5e5e_84%,#626262_100%)]">
          <Toolbar />
          <TabBar />
        </div>
        <div className="relative flex min-h-0 flex-1 overflow-hidden bg-white">
          <MainCard />
          <Sidebar />
          <div className="pointer-events-none absolute inset-x-0 bottom-0 h-[70px] bg-[linear-gradient(180deg,rgba(0,0,0,0),rgba(0,0,0,0.1))]" />
        </div>
      </div>
      <Dock />
    </div>
  );
}
